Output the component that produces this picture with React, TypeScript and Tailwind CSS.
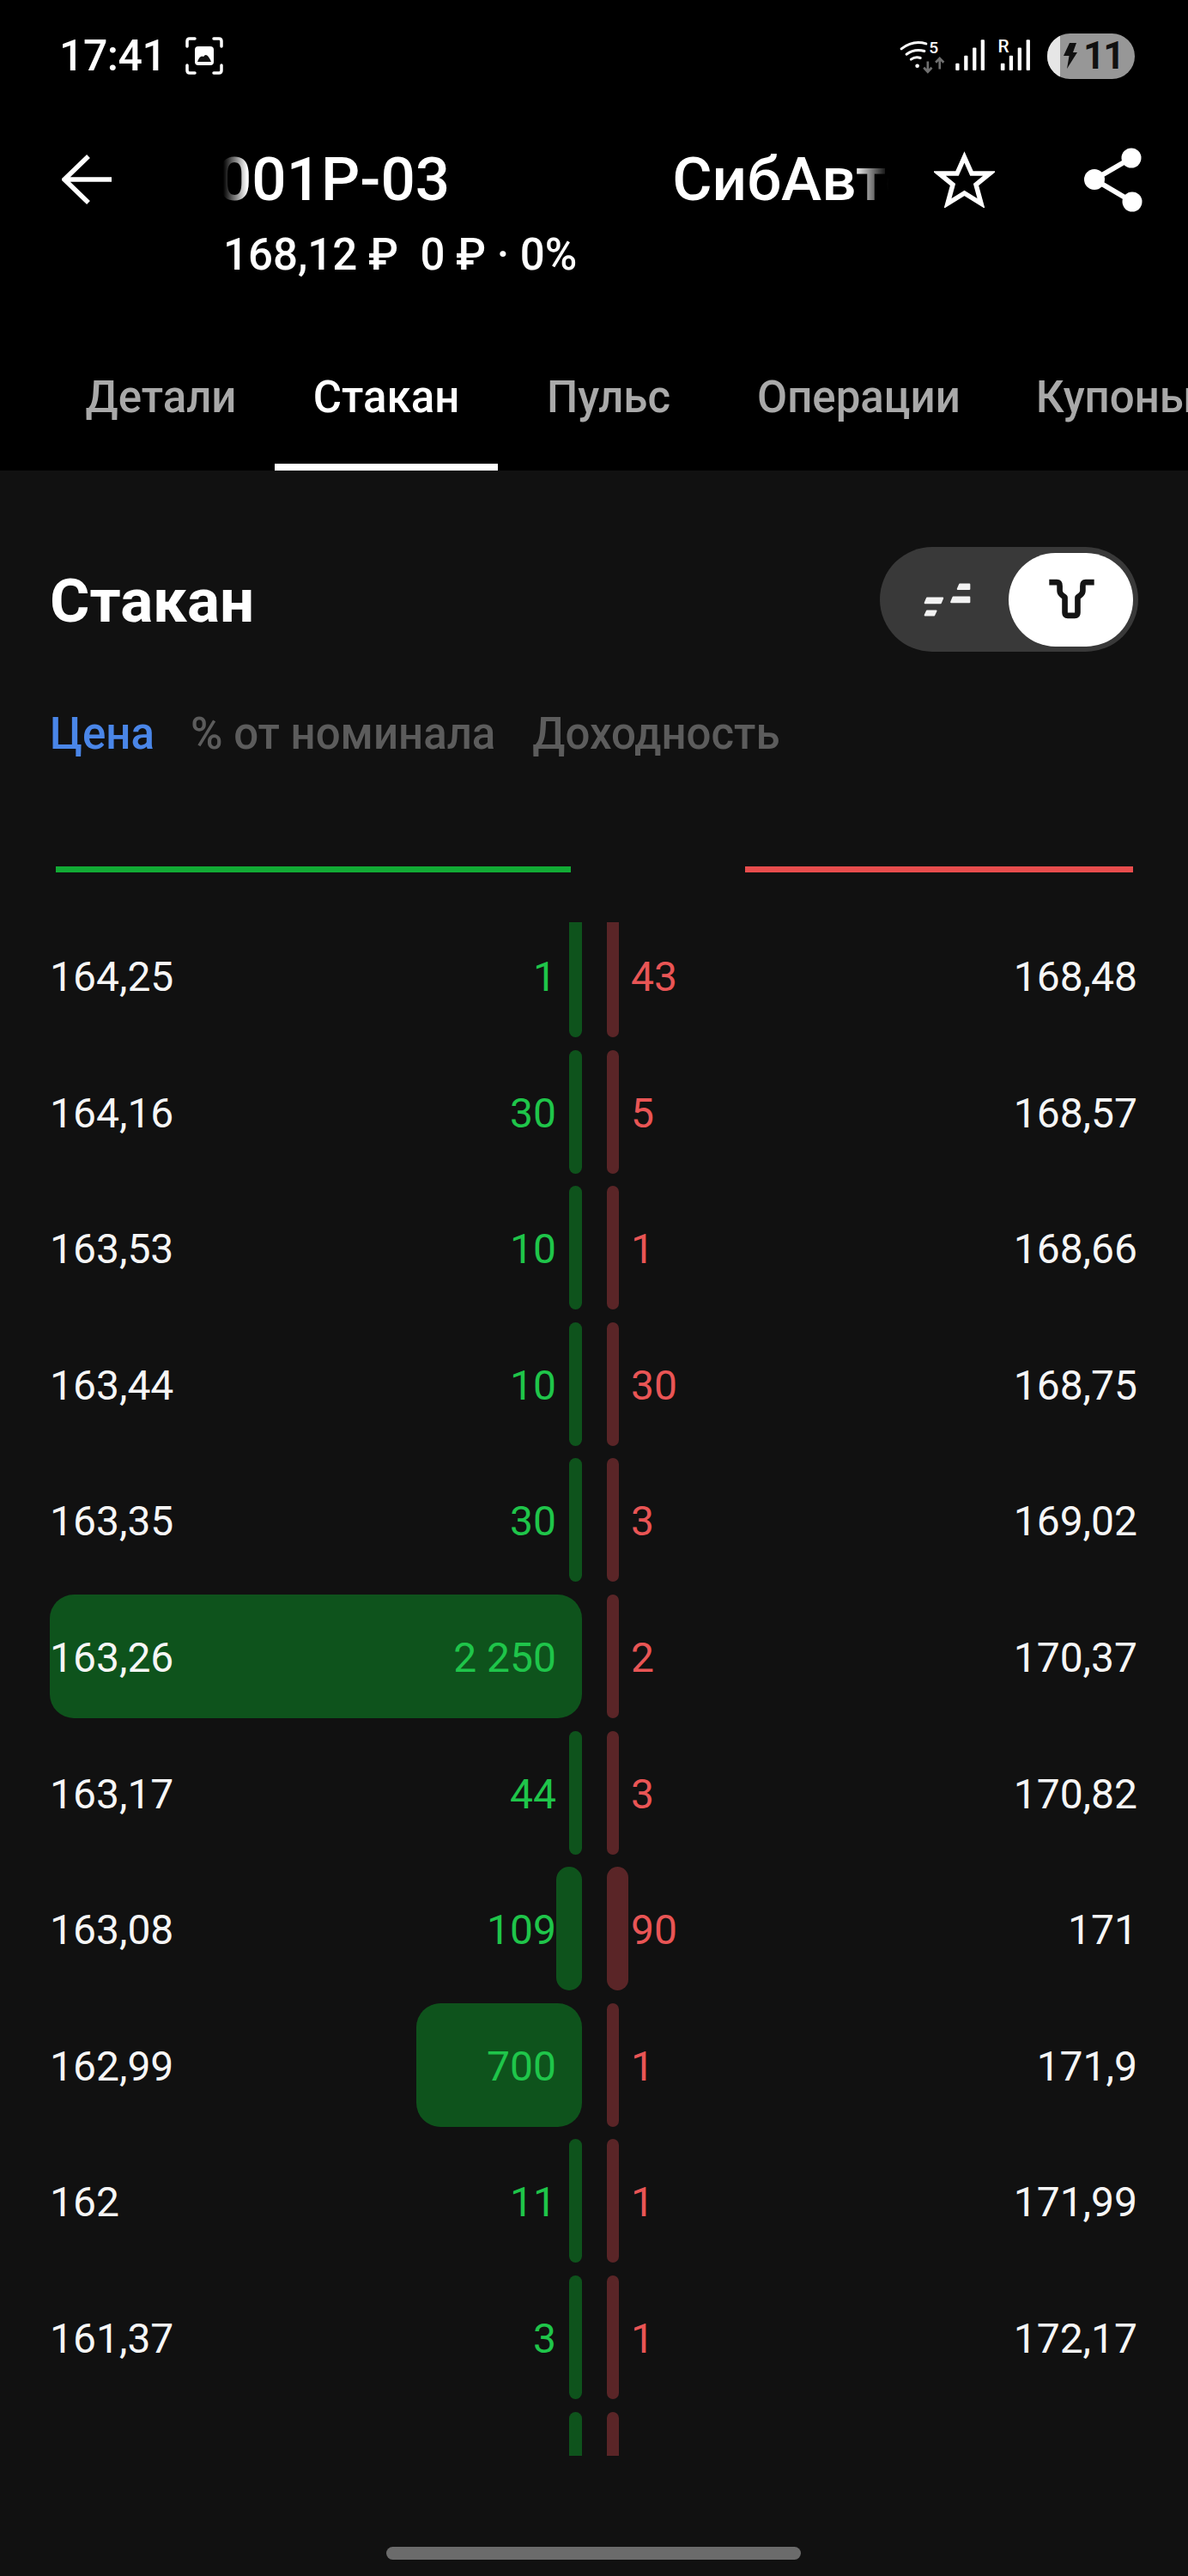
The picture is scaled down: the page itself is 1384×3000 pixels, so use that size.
import React from "react";

type Row = { bp: string; bq: string; bw: number; aq: string; aw: number; ap: string };

const rows: Row[] = [
  { bp: "164,25", bq: "1", bw: 15, aq: "43", aw: 14, ap: "168,48" },
  { bp: "164,16", bq: "30", bw: 15, aq: "5", aw: 14, ap: "168,57" },
  { bp: "163,53", bq: "10", bw: 15, aq: "1", aw: 14, ap: "168,66" },
  { bp: "163,44", bq: "10", bw: 15, aq: "30", aw: 14, ap: "168,75" },
  { bp: "163,35", bq: "30", bw: 15, aq: "3", aw: 14, ap: "169,02" },
  { bp: "163,26", bq: "2 250", bw: 620, aq: "2", aw: 14, ap: "170,37" },
  { bp: "163,17", bq: "44", bw: 15, aq: "3", aw: 14, ap: "170,82" },
  { bp: "163,08", bq: "109", bw: 30, aq: "90", aw: 25, ap: "171" },
  { bp: "162,99", bq: "700", bw: 193, aq: "1", aw: 14, ap: "171,9" },
  { bp: "162", bq: "11", bw: 15, aq: "1", aw: 14, ap: "171,99" },
  { bp: "161,37", bq: "3", bw: 15, aq: "1", aw: 14, ap: "172,17" },
  { bp: "", bq: "", bw: 15, aq: "", aw: 14, ap: "" },
];

function StatusIcons() {
  return (
    <svg viewBox="30 45 475 130" className="w-[158px] h-[43px]">
      <g fill="none" stroke="#fff" strokeWidth="9" strokeLinecap="round">
        <path d="M41 84 Q82 52 128 66" />
        <path d="M59 103 Q88 82 122 92" />
        <path d="M75 121 Q90 110 108 116" />
      </g>
      <circle cx="97" cy="144" r="7" fill="#fff" />
      <text x="138" y="100" fill="#fff" fontSize="58" fontWeight="500" fontFamily="Roboto, sans-serif">5</text>
      <g fill="none" stroke="#6f6f6f" strokeWidth="8">
        <path d="M134 128 V164 M120 150 L134 165 L148 150" />
        <path d="M176 155 V118 M162 132 L176 117 L190 132" />
      </g>
      <g fill="#fff">
        <rect x="232" y="135" width="13" height="25" rx="3" />
        <rect x="262" y="108" width="13" height="52" rx="3" />
        <rect x="292" y="80" width="13" height="80" rx="3" />
        <rect x="321" y="52" width="13" height="108" rx="3" />
        <rect x="391" y="135" width="14" height="25" rx="3" />
        <rect x="421" y="108" width="13" height="52" rx="3" />
        <rect x="451" y="80" width="13" height="80" rx="3" />
        <rect x="481" y="52" width="13" height="108" rx="3" />
      </g>
      <text x="381" y="96" fill="#fff" fontSize="63" fontWeight="500" fontFamily="Roboto, sans-serif">R</text>
    </svg>
  );
}

function Battery() {
  return (
    <div className="w-[102px] h-[53px] rounded-full bg-[#979797] overflow-hidden flex items-center">
      <div className="w-[15px] h-full bg-[#e6e6e6] shrink-0" />
      <svg viewBox="0 0 18 30" className="w-[18px] h-[30px] ml-[2px] shrink-0">
        <path d="M9 0 H17 L13 11 H18 L6 30 L8.5 15 H2 Z" fill="#111" />
      </svg>
      <span className="ml-[7px] text-[44px] leading-none font-bold text-[#111] tracking-[-2px]">11</span>
    </div>
  );
}

function Cell({ price, qty, width, side }: { price: string; qty: string; width: number; side: "bid" | "ask" }) {
  const big = width > 100;
  const wide = width > 20;
  if (side === "bid") {
    return (
      <div className="grid w-[620px] h-[144px]">
        <div
          className={`[grid-area:1/1] justify-self-end h-full bg-[#0e531c] ${big ? "rounded-[28px]" : wide ? "rounded-[15px]" : "rounded-[8px]"}`}
          style={{ width }}
        />
        <div className="[grid-area:1/1] flex items-center justify-between pt-[4px] pr-[30px] text-[48px] leading-none">
          <span className="text-[#f6f6f6]">{price}</span>
          <span className="text-[#1fc54a]">{qty}</span>
        </div>
      </div>
    );
  }
  return (
    <div className="grid w-[618px] h-[144px]">
      <div
        className={`[grid-area:1/1] justify-self-start h-full bg-[#5a2527] ${wide ? "rounded-[13px]" : "rounded-[8px]"}`}
        style={{ width }}
      />
      <div className="[grid-area:1/1] flex items-center justify-between pt-[4px] pl-[28px] text-[48px] leading-none">
        <span className="text-[#e95555]">{qty}</span>
        <span className="text-[#f6f6f6]">{price}</span>
      </div>
    </div>
  );
}

export default function App() {
  return (
    <div className="w-[1384px] h-[3000px] bg-[#111111] overflow-hidden font-['Roboto',sans-serif] text-white">
      <div className="h-[548px] bg-black">
        <div className="h-[167px] flex items-start justify-between pl-[69px] pr-[62px] pt-[38px]">
          <div className="flex items-center h-[54px]">
            <span className="text-[50px] leading-none font-medium tracking-[-0.5px]">17:41</span>
            <svg viewBox="0 0 44 44" className="w-[44px] h-[44px] ml-[23px]">
              <path
                d="M2 11 V5 Q2 2 5 2 H11 M33 2 H39 Q42 2 42 5 V11 M42 33 V39 Q42 42 39 42 H33 M11 42 H5 Q2 42 2 39 V33"
                fill="none"
                stroke="#fff"
                strokeWidth="3.5"
                strokeLinecap="round"
              />
              <rect x="11" y="11" width="22" height="22" rx="4" fill="#fff" />
              <path d="M14 29 Q17 21 21 23 Q25 17 30 29 Z" fill="#111" />
            </svg>
          </div>
          <div className="flex items-center gap-[16px] h-[54px]">
            <StatusIcons />
            <Battery />
          </div>
        </div>

        <div className="h-[84px] flex items-center pl-[72px]">
          <svg viewBox="0 0 60 60" className="w-[60px] h-[60px] shrink-0">
            <path d="M58 30 H4 M31 3 L3 30 L31 57" fill="none" stroke="#fff" strokeWidth="5.5" />
          </svg>
          <div className="ml-[128px] w-[775px] shrink-0 overflow-hidden [mask-image:linear-gradient(to_right,transparent,black_28px,black_calc(100%-40px),transparent)]">
            <div className="flex whitespace-nowrap -ml-[7px] text-[71px] leading-[84px] font-medium">
              <span>001P-03</span>
              <span className="ml-[259px]">СибАвтоТранс</span>
            </div>
          </div>
          <svg viewBox="0 0 71 66" className="ml-[53px] w-[71px] h-[66px] shrink-0">
            <polygon
              points="35.5,7 44,26 65,26 49,39 55,61 35.5,49 16,61 22,39 6,26 27,26"
              fill="none"
              stroke="#fff"
              strokeWidth="5.5"
            />
          </svg>
          <svg viewBox="0 0 70 75" className="ml-[103px] w-[70px] h-[75px] shrink-0">
            <path d="M56 12 L13 37 L57 63" fill="none" stroke="#fff" strokeWidth="6" />
            <circle cx="56" cy="12" r="11.5" fill="#fff" />
            <circle cx="13" cy="37" r="12" fill="#fff" />
            <circle cx="57" cy="63" r="11.5" fill="#fff" />
          </svg>
        </div>

        <div className="mt-[16px] ml-[260px] text-[51px] leading-[60px] font-medium whitespace-pre">
          168,12 ₽  0 ₽ · 0%
        </div>

        <div className="mt-[94px] flex h-[127px] overflow-hidden whitespace-nowrap text-[51px] font-medium leading-[84px] text-[#a9a9a9]">
          <div className="ml-[55px] w-[265px] shrink-0 text-center">Детали</div>
          <div className="w-[260px] shrink-0 text-center text-white border-b-[8px] border-white">Стакан</div>
          <div className="ml-[12px] px-[45px] shrink-0">Пульс</div>
          <div className="ml-[11px] px-[45px] shrink-0">Операции</div>
          <div className="-ml-[2px] px-[45px] shrink-0">Купоны</div>
        </div>
      </div>

      <div className="mt-[89px] h-[122px] flex items-center justify-between pl-[58px] pr-[58px]">
        <div className="text-[71px] leading-none font-bold pt-[2px]">Стакан</div>
        <div className="w-[301px] h-[122px] rounded-full bg-[#393939] flex items-center pr-[6px]">
          <div className="flex-1 flex justify-center pl-[6px]">
            <svg viewBox="345 200 172 128" className="w-[57px] h-[43px]">
              <g fill="#f2f2f2" stroke="#f2f2f2" strokeWidth="6" strokeLinejoin="round">
                <polygon points="360,258 415,258 408,275 353,275" />
                <polygon points="360,303 392,303 385,318 353,318" />
                <polygon points="452,255 509,255 509,272 445,272" />
                <polygon points="475,210 509,210 509,226 468,226" />
              </g>
            </svg>
          </div>
          <div className="w-[145px] h-[109px] rounded-full bg-white flex items-center justify-center">
            <svg viewBox="775 190 175 150" className="w-[58px] h-[50px]">
              <path
                d="M785 205 H812 Q822 205 822 218 V235 Q822 243 830 250 L840 258 V312 Q840 322 850 322 H875 Q885 322 885 312 V258 L895 250 Q903 243 903 235 V218 Q903 205 913 205 H943"
                fill="none"
                stroke="#141414"
                strokeWidth="20"
                strokeLinejoin="round"
              />
            </svg>
          </div>
        </div>
      </div>

      <div className="mt-[66px] pl-[58px] flex items-center text-[51px] leading-[60px] font-medium text-[#5c5c5c]">
        <span className="text-[#4a86e8]">Цена</span>
        <span className="ml-[42px]">% от номинала</span>
        <span className="ml-[43px]">Доходность</span>
      </div>

      <div className="mt-[124px] flex">
        <div className="ml-[65px] w-[600px] h-[7px] bg-[#12ab35]" />
        <div className="ml-[203px] w-[452px] h-[7px] bg-[#e84d4d]" />
      </div>

      <div className="mt-[58px] h-[1786px] overflow-hidden">
        <div className="-mt-[10px] flex flex-col gap-[14.6px]">
          {rows.map((r, i) => (
            <div key={i} className="flex pl-[58px]">
              <Cell side="bid" price={r.bp} qty={r.bq} width={r.bw} />
              <div className="w-[29px] shrink-0" />
              <Cell side="ask" price={r.ap} qty={r.aq} width={r.aw} />
            </div>
          ))}
        </div>
      </div>

      <div className="mt-[106px] ml-[450px] w-[483px] h-[15px] rounded-full bg-[#6b6b6b]" />
    </div>
  );
}
